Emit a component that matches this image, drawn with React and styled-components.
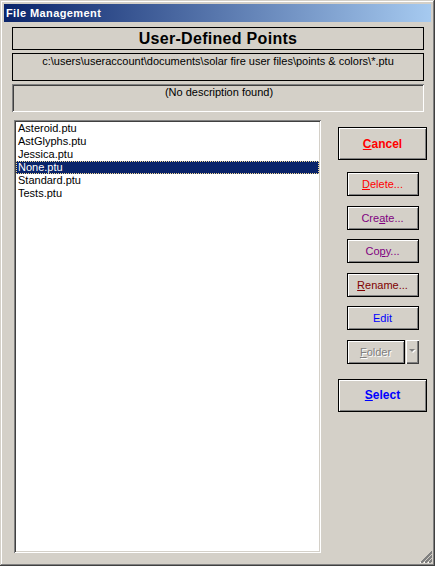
import React, { useState } from "react";
import styled, { createGlobalStyle } from "styled-components";

const GlobalStyle = createGlobalStyle`
  body {
    margin: 0;
    background: #d4d0c8;
    font-family: "Liberation Sans", Arial, sans-serif;
  }
`;

const files = ["Asteroid.ptu", "AstGlyphs.ptu", "Jessica.ptu", "None.ptu", "Standard.ptu", "Tests.ptu"];

const actions = [
  { key: "delete", color: "#ff0000", pre: "", hot: "D", post: "elete..." },
  { key: "create", color: "#800080", pre: "Cre", hot: "a", post: "te..." },
  { key: "copy", color: "#800080", pre: "Co", hot: "p", post: "y..." },
  { key: "rename", color: "#800000", pre: "", hot: "R", post: "ename..." },
  { key: "edit", color: "#0000ff", pre: "Edit", hot: "", post: "" },
];

const App = () => {
  const [selected, setSelected] = useState("None.ptu");

  return (
    <>
      <GlobalStyle />
      <Window>
        <TitleBar>File Management</TitleBar>
        <Body>
          <HeaderBox>User-Defined Points</HeaderBox>
          <PathBox>c:\users\useraccount\documents\solar fire user files\points &amp; colors\*.ptu</PathBox>
          <DescBox>(No description found)</DescBox>
          <Lower>
            <ListBox>
              {files.map((f) => (
                <Item key={f} $active={f === selected} onClick={() => setSelected(f)}>
                  {f}
                </Item>
              ))}
            </ListBox>
            <ButtonColumn>
              <BigButton $color="#ff0000">
                <u>C</u>ancel
              </BigButton>
              <SmallStack>
                {actions.map((a) => (
                  <SmallButton key={a.key} $color={a.color}>
                    {a.pre}
                    {a.hot && <u>{a.hot}</u>}
                    {a.post}
                  </SmallButton>
                ))}
                <FolderRow>
                  <FolderButton disabled>
                    <u>F</u>older
                  </FolderButton>
                  <ArrowButton disabled>
                    <Arrow />
                  </ArrowButton>
                </FolderRow>
              </SmallStack>
              <BigButton $color="#0000ff" $top={15}>
                <u>S</u>elect
              </BigButton>
            </ButtonColumn>
          </Lower>
        </Body>
        <Grip width="14" height="14" viewBox="0 0 14 14" shapeRendering="crispEdges">
          <line x1="2" y1="14" x2="14" y2="2" stroke="#fff" />
          <line x1="3" y1="14" x2="14" y2="3" stroke="#808080" strokeWidth="2" />
          <line x1="6" y1="14" x2="14" y2="6" stroke="#fff" />
          <line x1="7" y1="14" x2="14" y2="7" stroke="#808080" strokeWidth="2" />
          <line x1="10" y1="14" x2="14" y2="10" stroke="#fff" />
          <line x1="11" y1="14" x2="14" y2="11" stroke="#808080" strokeWidth="2" />
        </Grip>
      </Window>
    </>
  );
};

export default App;

const Window = styled.div`
  position: relative;
  box-sizing: border-box;
  width: 435px;
  height: 566px;
  padding: 4px;
  display: flex;
  flex-direction: column;
  background: #d4d0c8;
  box-shadow: inset -1px -1px #404040, inset 1px 1px #d4d0c8, inset -2px -2px #808080,
    inset 2px 2px #ffffff;
`;

const TitleBar = styled.div`
  height: 18px;
  display: flex;
  align-items: center;
  padding-left: 2px;
  background: linear-gradient(to right, #0a246a, #a6caf0);
  color: #ffffff;
  font-size: 11px;
  font-weight: bold;
  letter-spacing: 0.4px;
`;

const Body = styled.div`
  flex: 1;
  display: flex;
  flex-direction: column;
  padding: 5px 7px 0 8px;
  font-size: 11px;
  color: #000;
`;

const HeaderBox = styled.div`
  box-sizing: border-box;
  height: 23px;
  border: 1px solid #000;
  display: flex;
  align-items: center;
  justify-content: center;
  font-size: 16px;
  font-weight: bold;
  letter-spacing: 0.3px;
`;

const PathBox = styled.div`
  box-sizing: border-box;
  height: 28px;
  margin-top: 3px;
  padding-top: 1px;
  border: 1px solid #000;
  text-align: center;
  line-height: 13px;
`;

const DescBox = styled.div`
  box-sizing: border-box;
  height: 28px;
  margin-top: 3px;
  padding: 2px 0 0 2px;
  text-align: center;
  line-height: 13px;
  box-shadow: inset 1px 1px #808080, inset -1px -1px #ffffff, inset 2px 2px #404040,
    inset -2px -2px #d4d0c8;
`;

const Lower = styled.div`
  display: flex;
  margin-top: 8px;
`;

const ListBox = styled.div`
  box-sizing: border-box;
  flex-shrink: 0;
  width: 307px;
  height: 433px;
  margin-left: 2px;
  padding: 2px;
  background: #ffffff;
  box-shadow: inset 1px 1px #808080, inset -1px -1px #ffffff, inset 2px 2px #404040,
    inset -2px -2px #d4d0c8;
`;

const Item = styled.div`
  height: 13px;
  line-height: 13px;
  padding-left: 2px;
  white-space: nowrap;
  cursor: default;
  color: ${(p) => (p.$active ? "#ffffff" : "#000000")};
  background: ${(p) => (p.$active ? "#0a246a" : "transparent")};
  outline: ${(p) => (p.$active ? "1px dotted #f5db95" : "none")};
  outline-offset: -1px;
`;

const ButtonColumn = styled.div`
  flex-shrink: 0;
  width: 89px;
  margin-left: 17px;
  padding-top: 7px;
  display: flex;
  flex-direction: column;
  align-items: center;
`;

const RaisedButton = styled.button`
  box-sizing: border-box;
  padding: 0;
  border: 1px solid #000;
  background: #d4d0c8;
  box-shadow: inset 1px 1px #ffffff, inset -1px -1px #808080;
  font-family: "Liberation Sans", Arial, sans-serif;
  font-size: 11px;
  color: ${(p) => p.$color || "#000"};
  display: flex;
  align-items: center;
  justify-content: center;

  u {
    text-underline-offset: 1px;
  }
`;

const BigButton = styled(RaisedButton)`
  flex-shrink: 0;
  width: 89px;
  height: 33px;
  margin-top: ${(p) => p.$top || 0}px;
  font-size: 12px;
  font-weight: bold;
`;

const SmallStack = styled.div`
  display: flex;
  flex-direction: column;
  gap: 9.6px;
  margin-top: 12px;
`;

const SmallButton = styled(RaisedButton)`
  width: 72px;
  height: 24px;
`;

const FolderRow = styled.div`
  display: flex;
  gap: 1px;
  width: 72px;
`;

const FolderButton = styled(RaisedButton)`
  width: 58px;
  height: 24px;
  color: #808080;
  text-shadow: 1px 1px #ffffff;
`;

const ArrowButton = styled.button`
  box-sizing: border-box;
  width: 13px;
  height: 24px;
  padding: 9px 0 0;
  border: none;
  background: #d4d0c8;
  box-shadow: inset 1px 1px #ffffff, inset -1px -1px #404040, inset -2px -2px #808080;
  display: flex;
  justify-content: center;
`;

const Arrow = styled.span`
  width: 0;
  height: 0;
  border-left: 3px solid transparent;
  border-right: 3px solid transparent;
  border-top: 3px solid #808080;
  filter: drop-shadow(1px 1px 0 #ffffff);
`;

const Grip = styled.svg`
  position: absolute;
  right: 3px;
  bottom: 3px;
`;
